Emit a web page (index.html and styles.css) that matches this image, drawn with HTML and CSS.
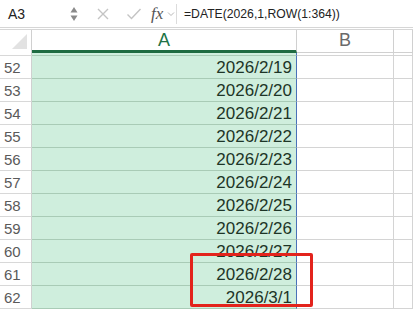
FILE: index.html
```html
<!DOCTYPE html>
<html lang="en">
<head>
    <meta charset="UTF-8">
    <title>Sheet</title>
    <link rel="stylesheet" href="styles.css">
</head>
<body>
    <!-- Formula bar -->
    <div class="formula-bar">
        <div class="name-box">
            <span class="name-text">A3</span>
            <svg class="spinner" width="8" height="16" viewBox="0 0 8 16">
                <path d="M4 1 L7.5 6.5 L0.5 6.5 Z" fill="#8a8a8a"/>
                <path d="M4 15 L7.5 9.5 L0.5 9.5 Z" fill="#8a8a8a"/>
            </svg>
        </div>
        <div class="fx-tools">
            <svg class="tool" width="14" height="14" viewBox="0 0 14 14">
                <path d="M2 2 L12 12 M12 2 L2 12" stroke="#c4c4c4" stroke-width="1.4" fill="none"/>
            </svg>
            <svg class="tool" width="16" height="14" viewBox="0 0 16 14">
                <path d="M1.5 7.5 L5.5 11.5 L14.5 2" stroke="#c4c4c4" stroke-width="1.4" fill="none"/>
            </svg>
            <span class="fx">fx</span>
            <svg class="chev" width="8" height="6" viewBox="0 0 8 6">
                <path d="M1 1.5 L4 4.5 L7 1.5" stroke="#b8b8b8" stroke-width="1" fill="none"/>
            </svg>
        </div>
        <div class="formula-input">=DATE(2026,1,ROW(1:364))</div>
    </div>

    <!-- Grid -->
    <div class="sheet">
        <div class="head-row">
            <div class="corner"><div class="corner-tri"></div></div>
            <div class="col-head col-a selected">A</div>
            <div class="col-head col-b">B</div>
            <div class="col-head col-c"></div>
        </div>
        <div class="row partial">
            <div class="row-num"></div>
            <div class="cell col-a"></div>
            <div class="cell col-b"></div>
            <div class="cell col-c"></div>
        </div>
        <div id="rows"></div>
        <div class="highlight"></div>
    </div>

    <script>
        const rows = document.getElementById("rows");
        const dates = ["2026/2/19", "2026/2/20", "2026/2/21", "2026/2/22", "2026/2/23", "2026/2/24",
            "2026/2/25", "2026/2/26", "2026/2/27", "2026/2/28", "2026/3/1"];
        dates.forEach((d, i) => {
            const row = document.createElement("div");
            row.className = "row";
            row.innerHTML =
                '<div class="row-num">' + (52 + i) + '</div>' +
                '<div class="cell col-a">' + d + '</div>' +
                '<div class="cell col-b"></div>' +
                '<div class="cell col-c"></div>';
            rows.appendChild(row);
        });
    </script>
</body>
</html>
```

FILE: styles.css
```css
body {
    margin: 0;
    width: 413px;
    height: 310px;
    overflow: hidden;
    background: #ffffff;
    font-family: "Liberation Sans", Arial, sans-serif;
}
.formula-bar {
    display: flex;
    align-items: center;
    height: 27px;
    border-bottom: 3px double #d6d6d6;
    box-sizing: content-box;
}
.name-box {
    width: 81px;
    display: flex;
    align-items: center;
    justify-content: space-between;
    padding: 0 3px 0 8px;
    box-sizing: border-box;
}
.name-text {
    font-size: 14px;
    color: #222222;
}
.fx-tools {
    display: flex;
    align-items: center;
    width: 95px;
    padding-left: 15px;
    box-sizing: border-box;
}
.tool {
    margin-right: 14px;
}
.tool + .tool {
    margin-left: 2px;
    margin-right: 9px;
}
.fx {
    font-family: "Liberation Serif", serif;
    font-style: italic;
    font-size: 17px;
    color: #555555;
}
.chev {
    margin-left: 4px;
}
.formula-input {
    flex: 1;
    height: 20px;
    line-height: 20px;
    border-left: 1px solid #dcdcdc;
    padding-left: 7px;
    font-size: 12.2px;
    color: #222222;
}
.sheet {
    position: relative;
}
.head-row {
    display: flex;
    height: 23px;
}
.corner {
    width: 32px;
    height: 23px;
    border-right: 1px solid #d0d0d0;
    box-sizing: border-box;
    position: relative;
}
.corner-tri {
    position: absolute;
    right: 4px;
    bottom: 4px;
    width: 0;
    height: 0;
    border-left: 15px solid transparent;
    border-bottom: 15px solid #e2e2e2;
}
.col-head {
    height: 23px;
    box-sizing: border-box;
    text-align: center;
    font-size: 18px;
    line-height: 21px;
    color: #6a6a6a;
    border-right: 1px solid #d0d0d0;
    border-bottom: 1px solid #d0d0d0;
}
.col-head.selected {
    color: #217346;
    background: #ffffff;
    border-bottom: 3px solid #1e6b41;
    border-right: 1px solid #d0d0d0;
}
.col-a {
    width: 265px;
}
.col-b {
    width: 97px;
}
.col-c {
    width: 19px;
}
.row {
    display: flex;
    height: 23px;
}
.row.partial {
    height: 3px;
}
.row-num {
    width: 32px;
    box-sizing: border-box;
    border-right: 1px solid #d0d0d0;
    border-bottom: 1px solid #d8d8d8;
    padding-left: 4px;
    font-size: 15px;
    line-height: 23px;
    color: #5a5a5a;
}
.cell {
    box-sizing: border-box;
    border-right: 1px solid #d4d4d4;
    border-bottom: 1px solid #d4d4d4;
}
.cell.col-a {
    background: #cfeedd;
    border-bottom: 1px solid #a9cbb6;
    border-right: 1px solid #4a72b8;
    text-align: right;
    padding-right: 4px;
    font-size: 17px;
    line-height: 23px;
    color: #1d3527;
}
.highlight {
    position: absolute;
    left: 190px;
    top: 223px;
    width: 123px;
    height: 54px;
    border: 3px solid #e3231c;
    border-radius: 2px;
    box-sizing: border-box;
}
```
